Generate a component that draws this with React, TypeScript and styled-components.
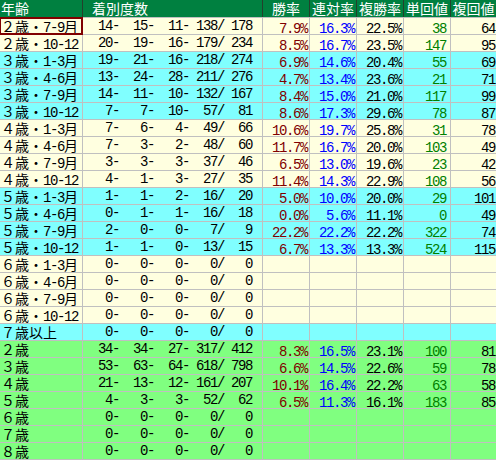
import React from 'react';
import styled, { createGlobalStyle } from 'styled-components';

const Global = createGlobalStyle`
  html, body { margin: 0; padding: 0; background: #ffffff; }
  body { font-family: "Noto Sans CJK JP", "Liberation Sans", sans-serif; }
`;

type Tone = 'cream' | 'cyan' | 'green';
const BG: Record<Tone, string> = { cream: '#ffffe0', cyan: '#80ffff', green: '#80ff80' };

const Sheet = styled.div`
  display: grid;
  grid-template-columns: 82px 179px 46px 46px 46px 46px 45px;
  grid-template-rows: 17px;
  grid-auto-rows: 16px;
  gap: 1px;
  width: 496px;
  background: #c0c0c0;
  padding-bottom: 1px;
`;

const HeaderCell = styled.div<{ $align: 'left' | 'center'; $indent: number }>`
  background: #008040;
  color: #ffffff;
  font-family: "Noto Sans CJK JP", sans-serif;
  font-size: 14px;
  line-height: 17px;
  white-space: nowrap;
  text-align: ${(p) => p.$align};
  padding-left: ${(p) => p.$indent}px;
  box-shadow: 1px 0 0 #24402c;
`;

const Cell = styled.div<{ $tone: Tone }>`
  background: ${(p) => BG[p.$tone]};
  line-height: 16px;
  height: 16px;
  white-space: nowrap;
`;

const LabelCell = styled(Cell)<{ $selected?: boolean }>`
  font-family: "Noto Sans CJK JP", sans-serif;
  font-size: 14px;
  color: #000000;
  padding-left: 1px;
  outline: ${(p) => (p.$selected ? '2px solid #800000' : 'none')};
  outline-offset: -1px;
  position: relative;
  z-index: ${(p) => (p.$selected ? 1 : 0)};
`;

const Num = styled.span`
  font-family: "Liberation Mono", "DejaVu Sans Mono", monospace;
  font-size: 14px;
  letter-spacing: -1.4px;
`;

const CountCell = styled(Cell)`
  display: grid;
  grid-template-columns: 36px 35px 35px 35px 28px;
  padding-right: 10px;
  color: #000000;
`;

const Count = styled(Num)`
  text-align: right;
`;

const ValueCell = styled(Cell)<{ $color: string; $pad: number }>`
  text-align: right;
  padding-right: ${(p) => p.$pad}px;
  color: ${(p) => p.$color};
`;

const withRuns = (s: string) =>
  s.split(/([\x20-\x7e]+)/).filter(Boolean).map((part, i) =>
    /^[\x20-\x7e]+$/.test(part) ? <Num key={i}>{part}</Num> : <span key={i}>{part}</span>
  );

type Row = {
  label: string;
  tone: Tone;
  c: [number, number, number, number, number];
  v?: [string, string, string, string, string];
};

const rows: Row[] = [
  { label: '２歳・7-9月', tone: 'cream', c: [14, 15, 11, 138, 178], v: ['7.9%', '16.3%', '22.5%', '38', '64'] },
  { label: '２歳・10-12', tone: 'cream', c: [20, 19, 16, 179, 234], v: ['8.5%', '16.7%', '23.5%', '147', '95'] },
  { label: '３歳・1-3月', tone: 'cyan', c: [19, 21, 16, 218, 274], v: ['6.9%', '14.6%', '20.4%', '55', '69'] },
  { label: '３歳・4-6月', tone: 'cyan', c: [13, 24, 28, 211, 276], v: ['4.7%', '13.4%', '23.6%', '21', '71'] },
  { label: '３歳・7-9月', tone: 'cyan', c: [14, 11, 10, 132, 167], v: ['8.4%', '15.0%', '21.0%', '117', '99'] },
  { label: '３歳・10-12', tone: 'cyan', c: [7, 7, 10, 57, 81], v: ['8.6%', '17.3%', '29.6%', '78', '87'] },
  { label: '４歳・1-3月', tone: 'cream', c: [7, 6, 4, 49, 66], v: ['10.6%', '19.7%', '25.8%', '31', '78'] },
  { label: '４歳・4-6月', tone: 'cream', c: [7, 3, 2, 48, 60], v: ['11.7%', '16.7%', '20.0%', '103', '49'] },
  { label: '４歳・7-9月', tone: 'cream', c: [3, 3, 3, 37, 46], v: ['6.5%', '13.0%', '19.6%', '23', '42'] },
  { label: '４歳・10-12', tone: 'cream', c: [4, 1, 3, 27, 35], v: ['11.4%', '14.3%', '22.9%', '108', '56'] },
  { label: '５歳・1-3月', tone: 'cyan', c: [1, 1, 2, 16, 20], v: ['5.0%', '10.0%', '20.0%', '29', '101'] },
  { label: '５歳・4-6月', tone: 'cyan', c: [0, 1, 1, 16, 18], v: ['0.0%', '5.6%', '11.1%', '0', '49'] },
  { label: '５歳・7-9月', tone: 'cyan', c: [2, 0, 0, 7, 9], v: ['22.2%', '22.2%', '22.2%', '322', '74'] },
  { label: '５歳・10-12', tone: 'cyan', c: [1, 1, 0, 13, 15], v: ['6.7%', '13.3%', '13.3%', '524', '115'] },
  { label: '６歳・1-3月', tone: 'cream', c: [0, 0, 0, 0, 0] },
  { label: '６歳・4-6月', tone: 'cream', c: [0, 0, 0, 0, 0] },
  { label: '６歳・7-9月', tone: 'cream', c: [0, 0, 0, 0, 0] },
  { label: '６歳・10-12', tone: 'cream', c: [0, 0, 0, 0, 0] },
  { label: '７歳以上', tone: 'cyan', c: [0, 0, 0, 0, 0] },
  { label: '２歳', tone: 'green', c: [34, 34, 27, 317, 412], v: ['8.3%', '16.5%', '23.1%', '100', '81'] },
  { label: '３歳', tone: 'green', c: [53, 63, 64, 618, 798], v: ['6.6%', '14.5%', '22.6%', '59', '78'] },
  { label: '４歳', tone: 'green', c: [21, 13, 12, 161, 207], v: ['10.1%', '16.4%', '22.2%', '63', '58'] },
  { label: '５歳', tone: 'green', c: [4, 3, 3, 52, 62], v: ['6.5%', '11.3%', '16.1%', '183', '85'] },
  { label: '６歳', tone: 'green', c: [0, 0, 0, 0, 0] },
  { label: '７歳', tone: 'green', c: [0, 0, 0, 0, 0] },
  { label: '８歳', tone: 'green', c: [0, 0, 0, 0, 0] },
];

const headers: { text: string; align: 'left' | 'center'; indent: number }[] = [
  { text: '年齢', align: 'left', indent: 1 },
  { text: '着別度数', align: 'left', indent: 9 },
  { text: '勝率', align: 'center', indent: 0 },
  { text: '連対率', align: 'center', indent: 0 },
  { text: '複勝率', align: 'center', indent: 0 },
  { text: '単回値', align: 'center', indent: 0 },
  { text: '複回値', align: 'center', indent: 0 },
];

const valueCols = [
  { color: '#800000', pad: 2 },
  { color: '#0000ff', pad: 2 },
  { color: '#000000', pad: 2 },
  { color: '#008000', pad: 4 },
  { color: '#000000', pad: 1 },
];

export default function App() {
  return (
    <>
      <Global />
      <Sheet>
        {headers.map((h) => (
          <HeaderCell key={h.text} $align={h.align} $indent={h.indent}>
            {h.text}
          </HeaderCell>
        ))}
        {rows.map((r, ri) => (
          <React.Fragment key={r.label}>
            <LabelCell $tone={r.tone} $selected={ri === 0}>
              {withRuns(r.label)}
            </LabelCell>
            <CountCell $tone={r.tone}>
              <Count>{r.c[0]}-</Count>
              <Count>{r.c[1]}-</Count>
              <Count>{r.c[2]}-</Count>
              <Count>{r.c[3]}/</Count>
              <Count>{r.c[4]}</Count>
            </CountCell>
            {valueCols.map((vc, i) => (
              <ValueCell key={i} $tone={r.tone} $color={vc.color} $pad={vc.pad}>
                {r.v ? <Num>{r.v[i]}</Num> : null}
              </ValueCell>
            ))}
          </React.Fragment>
        ))}
      </Sheet>
    </>
  );
}
